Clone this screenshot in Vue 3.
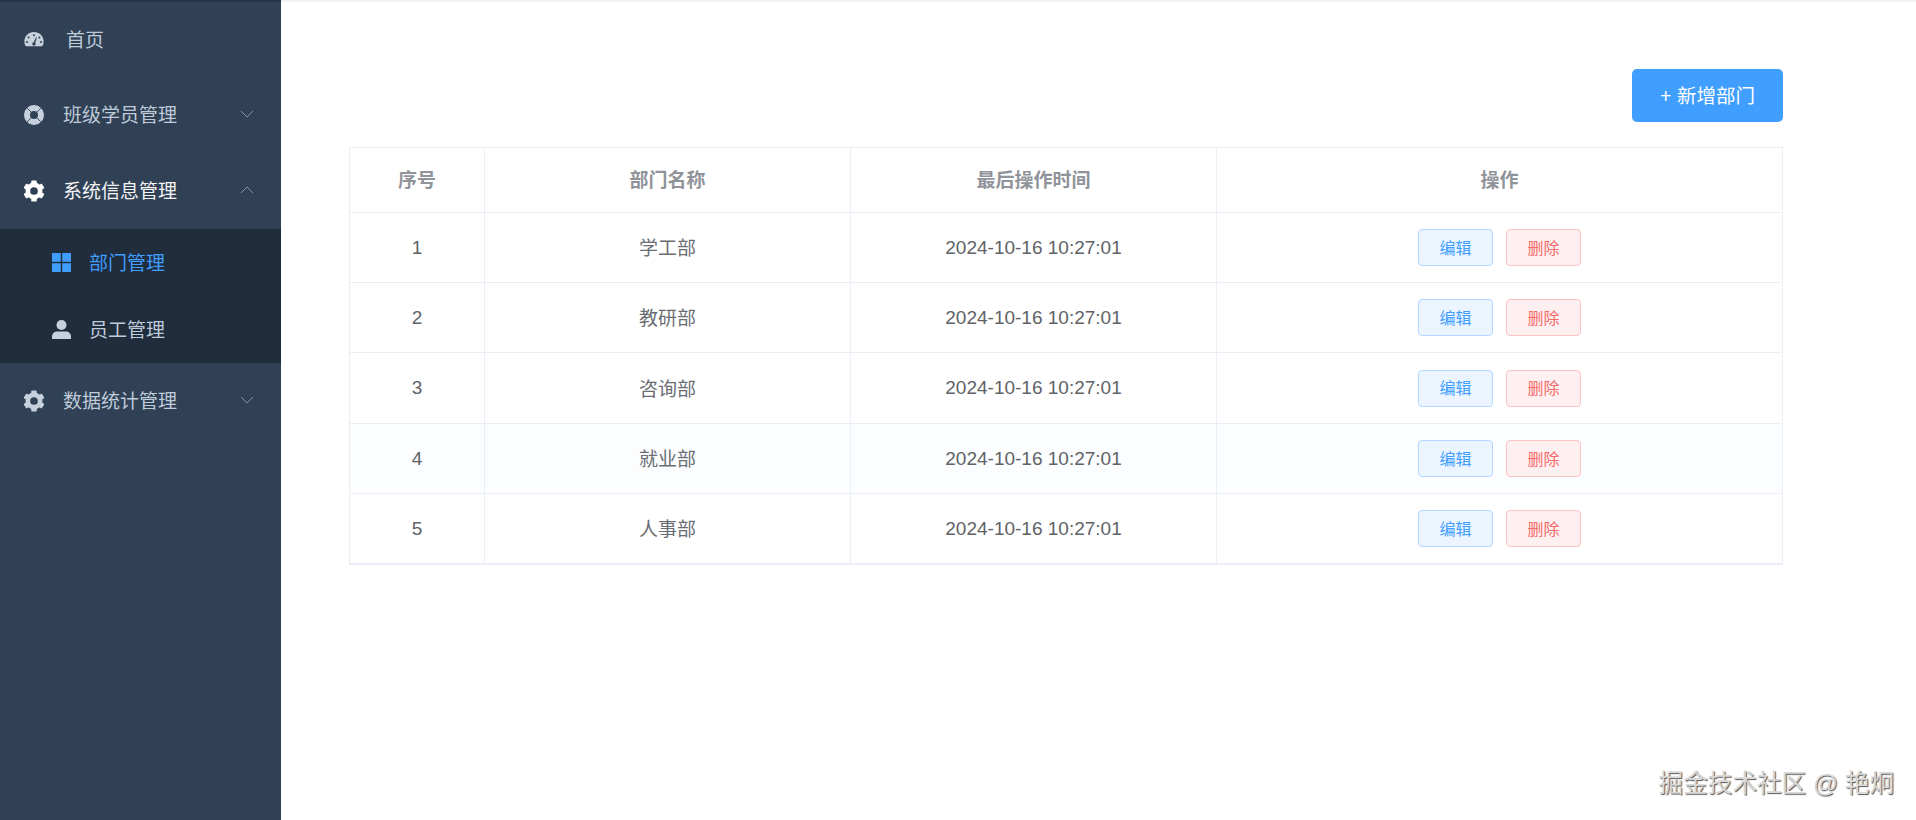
<script setup>
const rows = [
  { id: 1, name: '学工部', hover: false },
  { id: 2, name: '教研部', hover: false },
  { id: 3, name: '咨询部', hover: false },
  { id: 4, name: '就业部', hover: true },
  { id: 5, name: '人事部', hover: false },
]
const time = '2024-10-16 10:27:01'
const teeth = [0, 60, 120, 180, 240, 300]
</script>

<template>
  <div class="page">
    <aside class="side">
      <div class="item first">
        <svg class="ic ic-home" viewBox="0 0 20 15"><path fill="currentColor" fill-rule="evenodd" d="M10 0C4.600 0 .4 4 .4 9.400c0 1.700.4 3.200 1 4.400.2.300.5.500.9.500h15.400c.4 0 .7-.2.900-.500.6-1.200 1-2.700 1-4.400C19.600 4 15.400 0 10 0zM10 2.200a1 1 0 1 1 0 2 1 1 0 0 1 0-2zM4.600 4.400a1 1 0 1 1 0 2 1 1 0 0 1 0-2zM15.400 4.400a1 1 0 1 1 0 2 1 1 0 0 1 0-2zM3 9a1 1 0 1 1 0 2 1 1 0 0 1 0-2zM17 9a1 1 0 1 1 0 2 1 1 0 0 1 0-2zM12.100 5.200l.8.300-1.700 5.200a1.700 1.700 0 1 1-1.500-.5z"/></svg>
        <span class="label home">首页</span>
      </div>
      <div class="item">
        <svg class="ic" viewBox="0 0 20 20"><path fill="currentColor" fill-rule="evenodd" d="M10 0a10 10 0 1 1 0 20 10 10 0 0 1 0-20zm0 6a4 4 0 1 0 0 8 4 4 0 0 0 0-8z"/><path stroke="#304156" stroke-width="0.900" d="M2.800 2.800l4.400 4.400M17.200 2.800l-4.400 4.400M2.800 17.200l4.400-4.400M17.200 17.200l-4.400-4.400"/></svg>
        <span class="label">班级学员管理</span>
        <svg class="arrow" viewBox="0 0 14 8"><path d="M1 1l6 6 6-6" fill="none" stroke="currentColor" stroke-width="1"/></svg>
      </div>
      <div class="item open">
        <svg class="ic ic-gear" viewBox="0 0 24 24"><circle cx="12" cy="12" r="6.700" fill="none" stroke="currentColor" stroke-width="5"/><rect v-for="a in teeth" :key="a" x="9" y="0.500" width="6" height="5.500" rx="1" fill="currentColor" :transform="`rotate(${a} 12 12)`"/></svg>
        <span class="label gl">系统信息管理</span>
        <svg class="arrow" viewBox="0 0 14 8"><path d="M1 7l6-6 6 6" fill="none" stroke="currentColor" stroke-width="1"/></svg>
      </div>
      <div class="sub">
        <div class="sub-item active">
          <svg class="ic-sub" viewBox="0 0 19 19"><path fill="currentColor" d="M0 .5A.5.5 0 0 1 .5 0h8.250v8.750H0zM10.250 0H18.500a.5.5 0 0 1 .5.500v8.250h-8.750zM0 10.250h8.750V19H.5a.5.5 0 0 1-.5-.5zM10.250 10.250H19v8.250a.5.5 0 0 1-.5.500h-8.250z"/></svg>
          <span class="sub-text">部门管理</span>
        </div>
        <div class="sub-item">
          <svg class="ic-sub" viewBox="0 0 19 19"><circle cx="9.500" cy="5" r="5" fill="currentColor"/><path fill="currentColor" d="M0 19v-2.500C0 13.500 2.500 11.500 5 11.500h9c2.500 0 5 2 5 5V19z"/></svg>
          <span class="sub-text">员工管理</span>
        </div>
      </div>
      <div class="item">
        <svg class="ic ic-gear" viewBox="0 0 24 24"><circle cx="12" cy="12" r="6.700" fill="none" stroke="currentColor" stroke-width="5"/><rect v-for="a in teeth" :key="a" x="9" y="0.500" width="6" height="5.500" rx="1" fill="currentColor" :transform="`rotate(${a} 12 12)`"/></svg>
        <span class="label gl">数据统计管理</span>
        <svg class="arrow" viewBox="0 0 14 8"><path d="M1 1l6 6 6-6" fill="none" stroke="currentColor" stroke-width="1"/></svg>
      </div>
    </aside>
    <main class="main">
      <div class="toolbar">
        <button class="add">+ 新增部门</button>
      </div>
      <table class="tbl">
        <colgroup>
          <col class="c1" /><col class="c2" /><col class="c3" /><col class="c4" />
        </colgroup>
        <thead>
          <tr><th>序号</th><th>部门名称</th><th>最后操作时间</th><th>操作</th></tr>
        </thead>
        <tbody>
          <tr v-for="r in rows" :key="r.id" :class="{ hover: r.hover }">
            <td>{{ r.id }}</td>
            <td class="cjk">{{ r.name }}</td>
            <td>{{ time }}</td>
            <td>
              <div class="ops">
                <button class="op edit">编辑</button>
                <button class="op del">删除</button>
              </div>
            </td>
          </tr>
        </tbody>
      </table>
    </main>
    <div class="mark">掘金技术社区 @ 艳炯</div>
  </div>
</template>

<style>
html, body { margin: 0; background: #fff; }
</style>

<style scoped>
.page {
  display: flex;
  height: 820px;
  overflow: hidden;
  position: relative;
  font-family: "Liberation Sans", "Noto Sans CJK SC", sans-serif;
}
.side {
  width: 281px;
  flex: none;
  background: #304156;
  border-top: 2px solid #263445;
  box-sizing: border-box;
  color: #bfcbd9;
  font-size: 19px;
}
.item {
  height: 76px;
  display: flex;
  align-items: center;
  padding: 0 24px;
  position: relative;
}
.item.first { height: 75px; }
.item.open { color: #f4f4f5; }
.ic { width: 20px; height: 20px; flex: none; color: #c6d1dd; }
.item.open .ic { color: #fff; }
.ic-home { width: 20px; height: 15px; }
.ic-gear { width: 22px; height: 22px; margin-left: -1px; }
.label { margin-left: 19px; padding-bottom: 3px; }
.label.gl { margin-left: 18px; }
.label.home { margin-left: 22px; }
.arrow {
  position: absolute;
  right: 27px;
  top: 33px;
  width: 14px;
  height: 8px;
  color: #8493a5;
}
.sub { background: #1f2d3d; height: 134px; }
.sub-item {
  height: 67px;
  display: flex;
  align-items: center;
  padding-left: 52px;
}
.sub-item.active { color: #409eff; }
.sub-text { padding-bottom: 3px; }
.ic-sub { width: 19px; height: 19px; margin-right: 18px; flex: none; color: #c6d1dd; }
.sub-item.active .ic-sub { color: #409eff; }
.main {
  flex: 1;
  min-width: 0;
  border-top: 2px solid #f0f1f3;
  padding: 67px 133px 0 68px;
  box-sizing: border-box;
}
.toolbar { display: flex; justify-content: flex-end; margin-bottom: 25px; }
.add {
  width: 151px;
  height: 53px;
  background: #409eff;
  color: #fff;
  border: 0;
  border-radius: 5px;
  font: inherit;
  font-size: 19.500px;
  padding: 0 0 3px;
}
.tbl {
  width: 1434px;
  table-layout: fixed;
  border-collapse: separate;
  border-spacing: 0;
  border-left: 1px solid #ebeef5;
  border-top: 1px solid #ebeef5;
  font-size: 19px;
  color: #606266;
  text-align: center;
  box-sizing: border-box;
}
.c1 { width: 135px; }
.c2 { width: 366px; }
.c3 { width: 366px; }
th, td {
  border-right: 1px solid #ebeef5;
  border-bottom: 1px solid #ebeef5;
  padding: 0;
  box-sizing: border-box;
}
th { height: 65px; color: #909399; font-weight: 700; padding-bottom: 4px; }
td { height: 70px; }
tbody tr:nth-child(3) td, tbody tr:last-child td { height: 71px; }
td.cjk { padding-bottom: 2px; color: #6a6d72; }
tr.hover td { background: #fbfdff; }
tbody tr:last-child td { border-bottom-width: 2px; }
.ops { display: flex; justify-content: center; gap: 13px; }
.op {
  width: 75px;
  height: 37px;
  border-radius: 4px;
  border: 1px solid;
  font: inherit;
  font-size: 16px;
  padding: 0 0 2px;
}
.edit { background: #ecf5ff; border-color: #b3d8ff; color: #409eff; }
.del { background: #fef0f0; border-color: #fbc4c4; color: #f56c6c; }
.mark {
  position: absolute;
  right: 22px;
  bottom: 21px;
  font-size: 24.600px;
  color: #d8d8d8;
  text-shadow: 1px 1px 1px #555;
  white-space: nowrap;
}
</style>
